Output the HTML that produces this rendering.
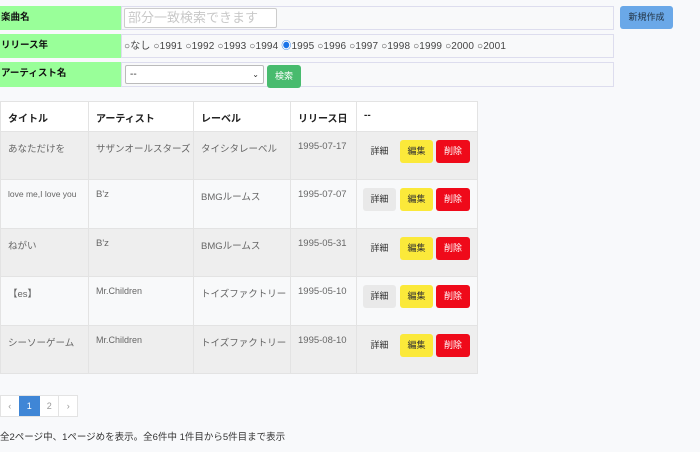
<!DOCTYPE html>
<html><head><meta charset="utf-8"><style>
*{box-sizing:border-box;margin:0;padding:0}
body{width:700px;height:452px;background:#f8f9fb;font-family:"Liberation Sans","Noto Sans CJK JP",sans-serif;color:#333;position:relative;overflow:hidden;font-size:10px}
.a{position:absolute}
.lab{background:#99ff99;font-weight:bold;font-size:9.5px;padding:3px 1px;color:#111}
.val{border:1px solid #dde;background:#f8f9fa}
.btn{position:absolute;border-radius:3px;font-size:9px;text-align:center;line-height:23px;height:23px}
.row{position:absolute;left:0;width:478px;border-bottom:1px solid #e3e3e3}
.c{position:absolute;top:0;bottom:0;border-left:1px solid #e3e3e3;padding:9px 7px;white-space:nowrap;font-size:9.5px;color:#666}
.h .c{color:#222;font-size:10px;font-weight:bold;padding:8px 7px}
</style></head><body>
<div class="a lab" style="left:0;top:6px;width:121px;height:24px">楽曲名</div>
<div class="a val" style="left:121px;top:6px;width:493px;height:24px"></div>
<div class="a" style="left:124px;top:8px;width:153px;height:20px;border:1px solid #ccc;background:#fff;border-radius:2px;color:#c8c8c8;font-size:13px;line-height:18px;padding-left:3px">部分一致検索できます</div>
<div class="a" style="left:620px;top:6px;width:53px;height:23px;background:#6aa8e8;border-radius:3px;font-size:9px;text-align:center;line-height:23px;color:#234">新規作成</div>
<div class="a lab" style="left:0;top:34px;width:121px;height:24px">リリース年</div>
<div class="a val" style="left:121px;top:34px;width:493px;height:24px"></div>
<div class="a" style="left:124px;top:37px;font-size:10px;color:#444;white-space:nowrap;letter-spacing:0.15px">○なし ○1991 ○1992 ○1993 ○1994 <span style="color:#1a73e8">◉</span>1995 ○1996 ○1997 ○1998 ○1999 ○2000 ○2001</div>
<div class="a lab" style="left:0;top:62px;width:121px;height:25px">アーティスト名</div>
<div class="a val" style="left:121px;top:62px;width:493px;height:25px"></div>
<div class="a" style="left:125px;top:65px;width:139px;height:19px;border:1px solid #bbb;background:#fff;border-radius:2px;font-size:10px;padding-left:4px;line-height:17px">--<span style="position:absolute;right:4px;font-size:8px">⌄</span></div>
<div class="a" style="left:267px;top:65px;width:34px;height:23px;background:#48bb6e;border-radius:3px;color:#fff;font-size:9px;text-align:center;line-height:23px">検索</div>

<div class="row h" style="top:101px;height:31px;background:#fff;border-top:1px solid #e3e3e3"><div class="c" style="left:0;border-left:1px solid #e3e3e3">タイトル</div><div class="c" style="left:88px">アーティスト</div><div class="c" style="left:193px">レーベル</div><div class="c" style="left:290px">リリース日</div><div class="c" style="left:356px;right:0;border-right:1px solid #e3e3e3">--</div></div>
<div class="row" style="top:132px;height:48px;background:#eee"><div class="c" style="left:0">あなただけを</div><div class="c" style="left:88px">サザンオールスターズ</div><div class="c" style="left:193px">タイシタレーベル</div><div class="c" style="left:290px">1995-07-17</div><div class="c" style="left:356px;right:0;border-right:1px solid #e3e3e3"></div></div>
<div class="row" style="top:180px;height:49px;background:#f8f9fa"><div class="c" style="left:0;font-size:8.5px">love me,I love you</div><div class="c" style="left:88px">B'z</div><div class="c" style="left:193px">BMGルームス</div><div class="c" style="left:290px">1995-07-07</div><div class="c" style="left:356px;right:0;border-right:1px solid #e3e3e3"></div></div>
<div class="row" style="top:229px;height:48px;background:#eee"><div class="c" style="left:0">ねがい</div><div class="c" style="left:88px">B'z</div><div class="c" style="left:193px">BMGルームス</div><div class="c" style="left:290px">1995-05-31</div><div class="c" style="left:356px;right:0;border-right:1px solid #e3e3e3"></div></div>
<div class="row" style="top:277px;height:49px;background:#f8f9fa"><div class="c" style="left:0">【es】</div><div class="c" style="left:88px;font-size:9px">Mr.Children</div><div class="c" style="left:193px">トイズファクトリー</div><div class="c" style="left:290px">1995-05-10</div><div class="c" style="left:356px;right:0;border-right:1px solid #e3e3e3"></div></div>
<div class="row" style="top:326px;height:48px;background:#eee"><div class="c" style="left:0">シーソーゲーム</div><div class="c" style="left:88px;font-size:9px">Mr.Children</div><div class="c" style="left:193px">トイズファクトリー</div><div class="c" style="left:290px">1995-08-10</div><div class="c" style="left:356px;right:0;border-right:1px solid #e3e3e3"></div></div>

<div class="btn" style="left:363px;top:140px;width:33px;color:#333">詳細</div><div class="btn" style="left:400px;top:140px;width:33px;background:#fbe93a">編集</div><div class="btn" style="left:436px;top:140px;width:34px;background:#ef0a1a;color:#fff">削除</div>
<div class="btn" style="left:363px;top:188px;width:33px;background:#e9e9e9">詳細</div><div class="btn" style="left:400px;top:188px;width:33px;background:#fbe93a">編集</div><div class="btn" style="left:436px;top:188px;width:34px;background:#ef0a1a;color:#fff">削除</div>
<div class="btn" style="left:363px;top:237px;width:33px">詳細</div><div class="btn" style="left:400px;top:237px;width:33px;background:#fbe93a">編集</div><div class="btn" style="left:436px;top:237px;width:34px;background:#ef0a1a;color:#fff">削除</div>
<div class="btn" style="left:363px;top:285px;width:33px;background:#e9e9e9">詳細</div><div class="btn" style="left:400px;top:285px;width:33px;background:#fbe93a">編集</div><div class="btn" style="left:436px;top:285px;width:34px;background:#ef0a1a;color:#fff">削除</div>
<div class="btn" style="left:363px;top:334px;width:33px">詳細</div><div class="btn" style="left:400px;top:334px;width:33px;background:#fbe93a">編集</div><div class="btn" style="left:436px;top:334px;width:34px;background:#ef0a1a;color:#fff">削除</div>

<div class="a" style="left:0;top:395px;height:22px;width:78px;border:1px solid #e3e3e3;background:#fff;font-size:9px;color:#999;display:flex">
<div style="width:18px;text-align:center;line-height:20px">‹</div><div style="width:22px;text-align:center;line-height:20px;background:#3f86d6;color:#fff">1</div><div style="width:20px;text-align:center;line-height:20px;border-right:1px solid #e3e3e3">2</div><div style="width:18px;text-align:center;line-height:20px">›</div></div>
<div class="a" style="left:0;top:429px;font-size:9.5px;color:#333;white-space:nowrap">全2ページ中、1ページめを表示。全6件中 1件目から5件目まで表示</div>
</body></html>
